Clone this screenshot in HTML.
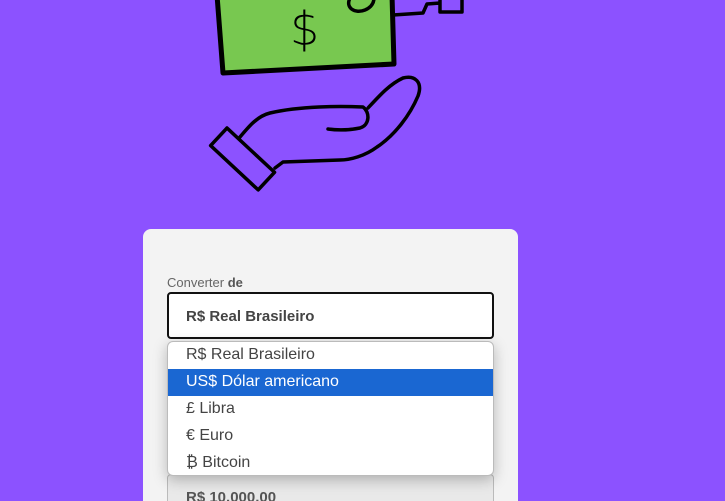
<!DOCTYPE html><html><head><style>
html,body{margin:0;width:725px;height:501px;overflow:hidden}
body{background:#8c52ff;font-family:"Liberation Sans",sans-serif;position:relative}
.card{position:absolute;left:143px;top:229px;width:375px;height:272px;background:#f3f3f3;border-radius:8px 8px 0 0}
.lbl{position:absolute;left:167px;top:275px;font-size:13px;color:#666}
.lbl b{color:#555}
.sel{position:absolute;left:167px;top:292px;width:306px;height:43px;border:2px solid #111;border-radius:4px;background:#fff;font-weight:bold;font-size:15px;color:#444;line-height:45px;padding-left:17px}
.inp{position:absolute;left:167px;top:474px;width:327px;height:27px;border:1px solid #bbb;border-bottom:none;border-radius:4px 4px 0 0;background:#e9e9e9;font-weight:bold;font-size:15px;color:#555;padding-left:18px;line-height:46px;box-sizing:border-box;overflow:hidden}
.dd{position:absolute;left:167px;top:341px;width:327px;height:135px;background:#fff;border:1px solid #bbb;border-radius:6px;box-shadow:0 4px 14px rgba(0,0,0,.25);overflow:hidden;box-sizing:border-box}
.dd div{height:27px;line-height:26px;padding-left:18px;font-size:16px;color:#444}
.dd .h{background:#1a67d2;color:#fff}
</style></head><body>
<svg width="725" height="220" style="position:absolute;left:0;top:0" fill="none" stroke="#000" stroke-width="3.5" stroke-linejoin="round" stroke-linecap="round">
<polygon points="217,-5 392,-5 394,64 223,73" fill="#78c850" stroke-width="5"/>
<text x="290" y="45" font-size="46" fill="#000" stroke="none" font-family="DejaVu Sans" font-weight="200">$</text>
<path d="M393,15 L423,13 L427,4 L440,3 M440,-2 L440,12 L462,12 L462,-2"/>
<path d="M350,-2 C345,8 355,14 365,10 C372,7 374,2 374,-2"/>
<rect x="0" y="0" width="65" height="24" transform="translate(227,128) rotate(43)" stroke-width="3.5"/>
<path d="M240,137 C250,125 258,116 270,113 C300,106 340,106 363,107 C370,112 370,125 360,128 C345,131 335,130 328,129"/>
<path d="M368,108 C380,95 390,84 403,78 C415,75 423,82 418,96 C410,115 395,135 377,147 C365,156 350,160 340,160 L283,162 L275,168"/>
</svg>
<div class="card"></div>
<div class="lbl">Converter <b>de</b></div>
<div class="sel">R$ Real Brasileiro</div>
<div class="inp">R$ 10.000,00</div>
<div class="dd"><div>R$ Real Brasileiro</div><div class="h">US$ Dólar americano</div><div>£ Libra</div><div>€ Euro</div><div>₿ Bitcoin</div></div>
</body></html>
